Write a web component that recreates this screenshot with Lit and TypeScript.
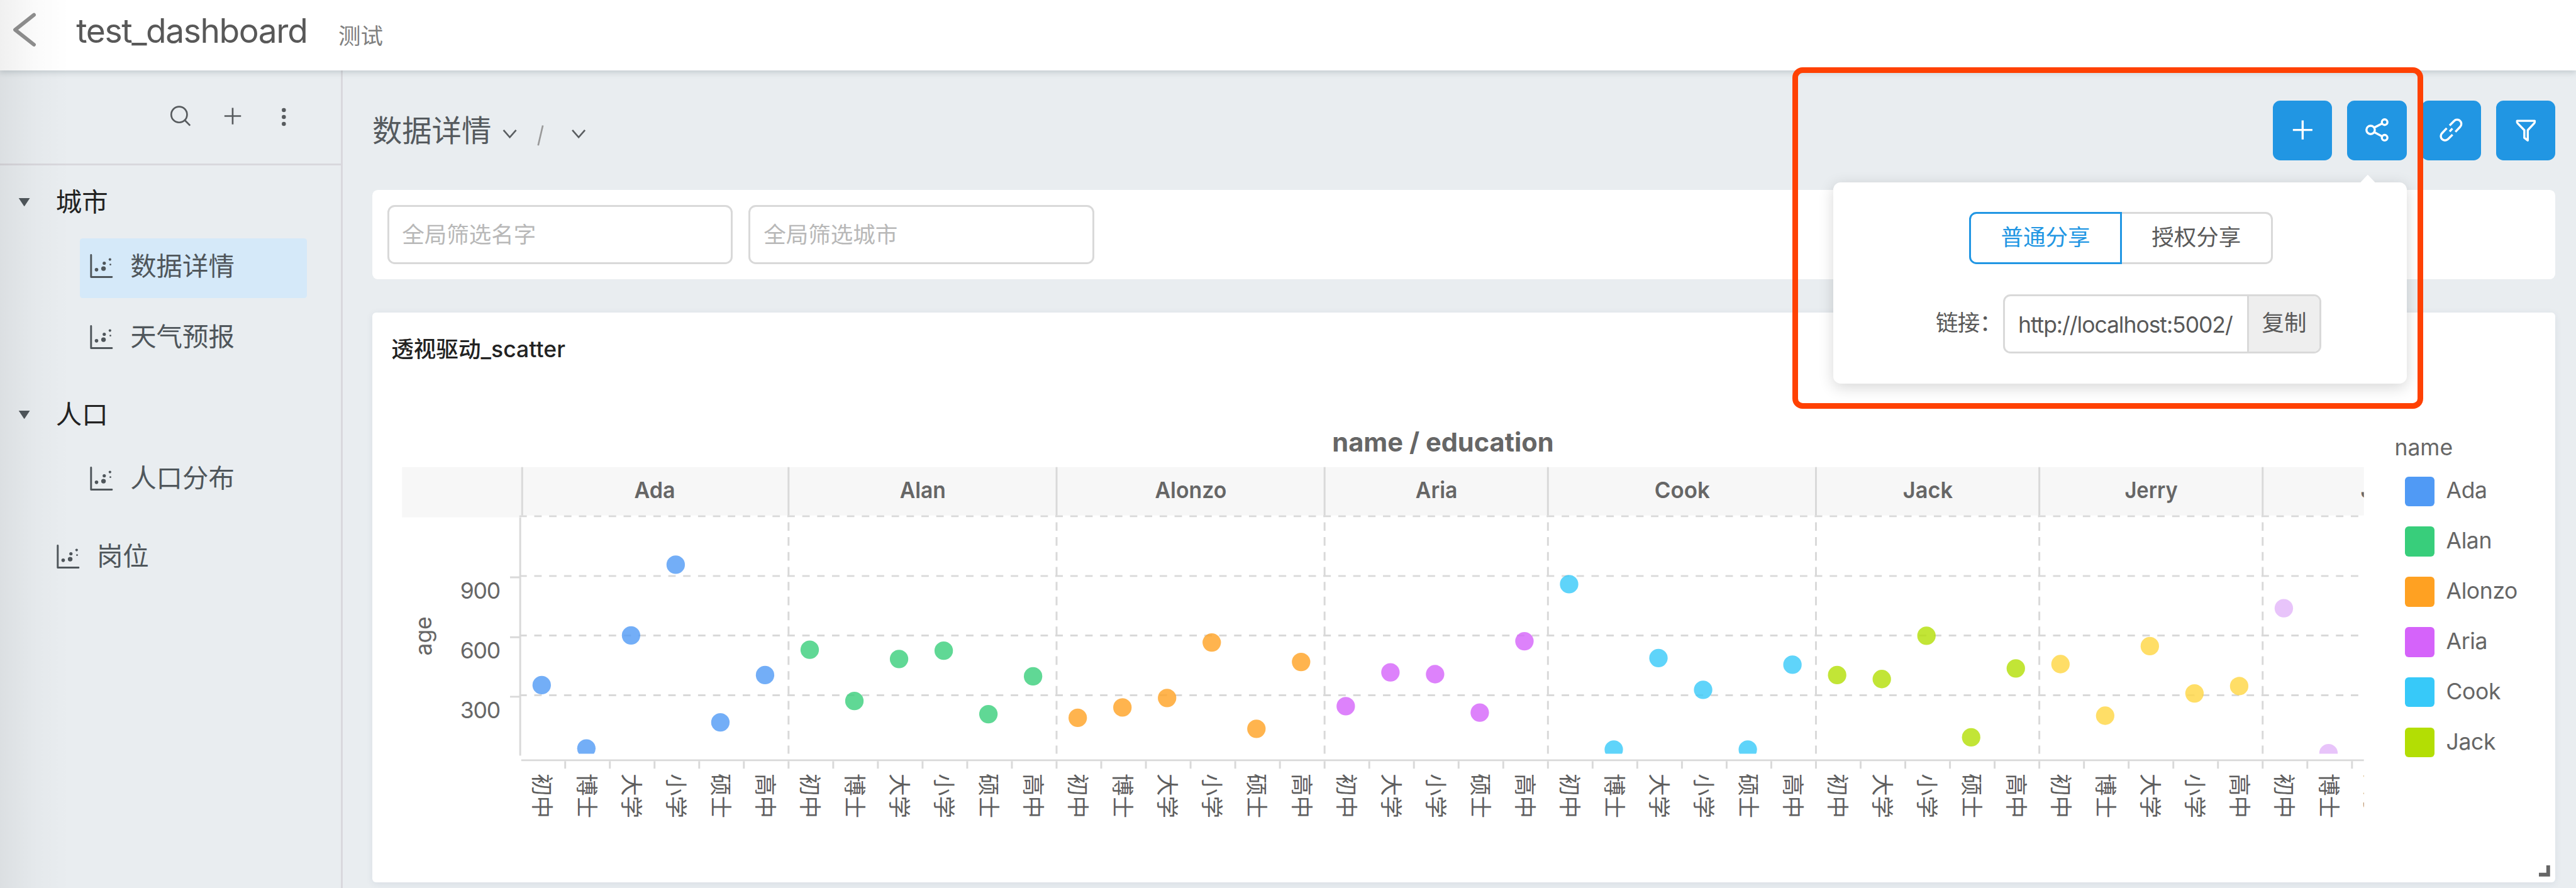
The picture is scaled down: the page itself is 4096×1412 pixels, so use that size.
import { LitElement, html, svg, unsafeCSS, nothing } from "lit";
import { customElement, property } from "lit/decorators.js";

/* Design units: the board is drawn on a 5536-unit wide grid. */
const SCALE = 4096 / 5536;

/* Style sheet tag: every "<number>u" is a length in design units. */
const sheet = (strings: TemplateStringsArray) =>
  unsafeCSS(
    strings[0].replace(/(-?\d+(?:\.\d+)?)u\b/g, (_m, n) => `${(parseFloat(n) * SCALE).toFixed(3)}px`)
  );

const scatterIcon = html`<svg class="scatter" viewBox="0 0 52 52">
  <path d="M3.8 2V49.4H48.5" fill="none" stroke="#4f565b" stroke-width="4" stroke-linecap="round" stroke-linejoin="round"/>
  <g fill="#4f565b">
    <circle cx="15.5" cy="33.6" r="3.8"/><circle cx="30.5" cy="31.2" r="5"/>
    <circle cx="32.1" cy="19.6" r="3.5"/><circle cx="44.4" cy="11.6" r="2.8"/>
    <circle cx="45.3" cy="22.6" r="1.9"/>
  </g>
</svg>`;

interface Series {
  name: string;
  color: string;
  width: number;
  levels: string[];
  points: number[];
}

const JUNIOR = "初中";
const DOCTOR = "博士";
const COLLEGE = "大学";
const PRIMARY = "小学";
const MASTER = "硕士";
const HIGH = "高中";
const ALL = [JUNIOR, DOCTOR, COLLEGE, PRIMARY, MASTER, HIGH];

const SERIES: Series[] = [
  { name: "Ada", color: "#509af5", width: 88, levels: ALL, points: [1472.6, 1608.7, 1365.8, 1213.7, 1552.6, 1451] },
  { name: "Alan", color: "#38ce7b", width: 99, levels: ALL, points: [1396.6, 1506.7, 1416.3, 1398.6, 1535, 1453.6] },
  { name: "Alonzo", color: "#ffa122", width: 154, levels: ALL, points: [1542.8, 1520.5, 1500.2, 1380.9, 1566.4, 1422.8] },
  { name: "Aria", color: "#d563fa", width: 90, levels: [JUNIOR, COLLEGE, PRIMARY, MASTER, HIGH], points: [1517.9, 1445.1, 1449, 1531.7, 1378.2] },
  { name: "Cook", color: "#37c9f9", width: 119, levels: ALL, points: [1255.6, 1611, 1414.3, 1482.5, 1611, 1428.7] },
  { name: "Jack", color: "#b3de04", width: 107, levels: [JUNIOR, COLLEGE, PRIMARY, MASTER, HIGH], points: [1451, 1459.5, 1366.5, 1584.8, 1436.6] },
  { name: "Jerry", color: "#ffd641", width: 114, levels: [JUNIOR, DOCTOR, COLLEGE, PRIMARY, HIGH], points: [1427.4, 1538.2, 1388.7, 1490.4, 1474.6] },
  { name: "J", color: "#e2b5f9", width: 0, levels: [JUNIOR, DOCTOR, COLLEGE], points: [1307.4, 1618.9] },
];

const LEFT = 1118;
const STEP = 96;
const RIGHT = 5080;
const GRID = [1109.6, 1238, 1366, 1494.4];

@customElement("scatter-chart")
class ScatterChart extends LitElement {
  static styles = sheet`
    :host { display: block; flex: none; width: 4300u; height: 1016u; }
    .plot { display: block; width: 100%; height: 100%; font-family: Inter, "Noto Sans CJK SC", sans-serif; font-size: 48px; }
    .band { fill: #f7f7f7; }
    .rule { stroke: #d9d9d9; stroke-width: 4; fill: none; }
    .head { font-weight: 600; fill: #666; }
    .main { font-weight: 700; font-size: 56px; fill: #666; }
    .label { fill: #666; }
    .level { fill: #5e5e5e; }
  `;

  private column(s: Series, x: number) {
    const span = s.levels.length * STEP;
    const end = Math.min(x + (s.points.length < s.levels.length ? 216 : span), RIGHT);
    return svg`
      ${GRID.map((y) => svg`<line class="rule" x1=${x - 2} x2=${end} y1=${y} y2=${y} stroke-dasharray="16 16"></line>`)}
      <line class="rule" x1=${x === LEFT ? x + 4 : x + 0.5} x2=${x === LEFT ? x + 4 : x + 0.5} y1="1004" y2="1108"></line>
      ${x > LEFT
        ? svg`<line class="rule" x1=${x + 0.5} x2=${x + 0.5} y1="1122.5" y2="1620" stroke-dasharray="18.5 13.5"></line>`
        : nothing}
      ${s.width
        ? svg`<text class="head" x=${x + span / 2 + 1 - s.width / 2} y="1070.8" textLength=${s.width} lengthAdjust="spacingAndGlyphs">${s.name}</text>`
        : svg`<text class="head" x="5073" y="1070.8">${s.name}</text>`}
      <g clip-path="url(#area)">
        ${s.points.map((y, i) => svg`<circle cx=${x + 46 + i * STEP} cy=${y} r="19.8" fill=${s.color} fill-opacity="0.8"></circle>`)}
      </g>
      ${s.levels.map((l, i) => {
        const cx = x + 48 + i * STEP;
        return svg`
          <line class="rule" x1=${cx + 48.5} x2=${cx + 48.5} y1="1636" y2="1652"></line>
          <text class="level" transform="translate(${cx - 18.6} 1662.5) rotate(90)">${l}</text>`;
      })}
    `;
  }

  render() {
    let x = LEFT;
    const columns = SERIES.map((s) => {
      const out = this.column(s, x);
      x += s.levels.length * STEP;
      return out;
    });
    return html`<svg class="plot" viewBox="800 880 4300 1016">
      <defs>
        <clipPath id="frame"><rect x="800" y="880" width="4280" height="1016"/></clipPath>
        <clipPath id="area"><rect x="1118" y="1110" width="3962" height="510"/></clipPath>
      </defs>
      <text class="main" x="2863" y="971" textLength="476" lengthAdjust="spacingAndGlyphs">name / education</text>
      <rect class="band" x="864" y="1004" width="256" height="108"/>
      <rect class="band" x="1120" y="1004" width="3960" height="104"/>
      <g clip-path="url(#frame)">${columns}</g>
      <path class="rule" d="M1117.8 1112V1624M1096 1241H1118M1096 1369.5H1118M1096 1497.5H1118M1120 1634H5080"/>
      <text class="label" x="989" y="1287" textLength="87">900</text>
      <text class="label" x="989" y="1415.2" textLength="87">600</text>
      <text class="label" x="989" y="1543.4" textLength="87">300</text>
      <text class="label" transform="translate(927 1409) rotate(-90)" textLength="84">age</text>
    </svg>`;
  }
}

@customElement("share-popover")
class SharePopover extends LitElement {
  static styles = sheet`
    :host { display: flex; flex-direction: column; align-items: center; box-sizing: border-box;
      width: 1232u; height: 432u; padding-top: 64u; background: #fff; border-radius: 16u;
      box-shadow: 0 8u 32u rgba(0,0,0,0.16); font-family: Inter, "Noto Sans CJK SC", sans-serif; font-size: 48u;
      line-height: 64u; color: #595959; position: relative; }
    .arrow { position: absolute; top: -18u; right: 68u; width: 32u; height: 18u; display: block; }
    .modes { display: flex; width: 652u; height: 112u; margin-left: 4u; }
    .mode { box-sizing: border-box; flex: none; display: flex; align-items: center; justify-content: center;
      width: 324u; border: 3px solid #d9d9d9; border-left: 0; border-radius: 0 16u 16u 0; padding-bottom: 2u; }
    .mode.active { width: 328u; border: 3px solid #2196e3; border-radius: 16u 0 0 16u; color: #2196e3; }
    .link { display: flex; align-items: center; margin-top: 64u; height: 128u; align-self: flex-start; padding-left: 220u; }
    .caption { width: 145u; white-space: nowrap; padding-bottom: 4u; letter-spacing: -0.8u; }
    .field { box-sizing: border-box; display: flex; width: 684u; height: 128u; border: 3px solid #d9d9d9;
      border-radius: 16u; overflow: hidden; }
    .url { flex: 1; display: flex; align-items: center; min-width: 0; padding: 4u 29u 0 28u; }
    .value { overflow: hidden; white-space: nowrap; letter-spacing: -1.4u; }
    .copy { box-sizing: border-box; width: 156u; background: #eee; border-left: 3px solid #d9d9d9; display: flex;
      align-items: center; justify-content: center; padding-bottom: 4u; }
  `;
  render() {
    return html`
      <svg class="arrow" viewBox="0 0 32 18"><path d="M16 1L32 18H0Z" fill="#fff"/></svg>
      <div class="modes"><div class="mode active">普通分享</div><div class="mode">授权分享</div></div>
      <div class="link">
        <div class="caption">链接：</div>
        <div class="field">
          <div class="url"><div class="value">http://localhost:5002/s</div></div>
          <div class="copy">复制</div>
        </div>
      </div>`;
  }
}

@customElement("nav-item")
class NavItem extends LitElement {
  @property() label = "";
  static styles = sheet`
    :host { display: flex; align-items: center; box-sizing: border-box; height: 128u; width: 488u;
      border-radius: 6u; padding: 0 0 8u 20u; gap: 36u; font-size: 56u; line-height: 80u; color: #4f565b; white-space: nowrap; }
    .scatter { width: 52u; height: 52u; flex: none; position: relative; top: 0.5u; }
  `;
  render() {
    return html`${scatterIcon}<span>${this.label}</span>`;
  }
}

@customElement("app-root")
class AppRoot extends LitElement {
  static styles = sheet`
    :host { display: flex; flex-direction: column; position: relative; width: 100vw; height: 100vh; overflow: hidden;
      background: #e9edf0; font-family: Inter, "Noto Sans CJK SC", sans-serif; color: #595959; }
    svg { display: block; }
    .top { flex: none; display: flex; align-items: flex-start; height: 152u; background: #fff; position: relative;
      box-shadow: 0 3u 12u 2u rgba(60,80,90,0.22); z-index: 1; }
    .back { width: 164u; height: 128u; }
    .board { font-size: 72u; line-height: 96u; padding-top: 18u; letter-spacing: -1.9u; color: #585858; width: 563u; }
    .note { font-size: 48u; line-height: 64u; padding-top: 46u; color: #808080; }
    .body { flex: 1; display: flex; min-height: 0; }
    .side { flex: none; box-sizing: border-box; width: 736u; border-right: 3px solid #d9d8dd; display: flex; flex-direction: column; }
    .tools { flex: none; box-sizing: border-box; height: 204u; border-bottom: 3px solid #d9d8dd; }
    .tools svg { width: 732u; height: 200u; }
    .group { box-sizing: border-box; display: flex; align-items: center; height: 156u; padding: 1u 0 0 39u; font-size: 56u;
      line-height: 80u; color: #222; gap: 55u; }
    .group.second { height: 176u; padding-top: 23u; }
    .caret { width: 26u; height: 18u; }
    .kids { display: flex; flex-direction: column; gap: 24u; padding-left: 172u; }
    .on { background: #d5e9f9; }
    .solo { margin: 40u 0 0 100u; }
    .main { flex: 1; min-width: 0; display: flex; flex-direction: column; padding: 64u 44u 12u 64u; }
    .bar { flex: none; display: flex; justify-content: space-between; height: 192u; }
    .crumbs { display: flex; height: 128u; align-items: center; font-size: 64u; line-height: 80u; color: #555a5e; }
    .crumbs svg { width: 240u; height: 80u; }
    .actions { display: flex; gap: 32u; position: relative; }
    .act { width: 128u; height: 128u; border-radius: 16u; background: #2196e3; }
    .act svg { width: 128u; height: 128u; fill: none; stroke: #fff; stroke-width: 4.6; stroke-linecap: round; stroke-linejoin: round; }
    .pop { position: absolute; top: 176u; right: 320u; z-index: 3; }
    .filters { flex: none; box-sizing: border-box; display: flex; gap: 34u; height: 192u; padding: 32u; background: #fff; border-radius: 12u; }
    .pick { box-sizing: border-box; width: 743u; height: 128u; border: 3px solid #d9d9d9; border-radius: 16u; display: flex;
      align-items: center; padding: 3u 0 0 28u; font-size: 48u; line-height: 64u; color: #b8b8b8; }
    .card { flex: none; display: flex; flex-direction: column; position: relative; height: 1224u; margin-top: 72u; background: #fff; border-radius: 8u;
      box-shadow: 0 4u 16u rgba(40,60,110,0.08); }
    .name { flex: none; height: 208u; box-sizing: border-box; padding: 47u 0 0 41u; font-size: 48u; line-height: 64u;
      font-weight: 500; color: #222; letter-spacing: 0.1u; }
    .chart { display: flex; }
    .legend { display: flex; flex-direction: column; padding-top: 50u; margin-left: 46u; font-size: 48u; color: #666; line-height: 64u; }
    .heading { height: 94u; }
    .entries { display: flex; flex-direction: column; gap: 44u; padding-left: 22u; }
    .entry { display: flex; height: 64u; gap: 25u; align-items: center; letter-spacing: -0.5u; }
    .swatch { width: 64u; height: 64u; border-radius: 8u; }
    .entry span { position: relative; top: -2u; }
    .grip { position: absolute; right: 12u; bottom: 12u; width: 24u; height: 24u; }
    .shade { position: absolute; left: 0; top: 0; bottom: 0; width: 150u; z-index: 2;
      background: linear-gradient(90deg, rgba(0,0,0,0.058), rgba(0,0,0,0.02) 50%, rgba(0,0,0,0)); }
    .mark { position: absolute; box-sizing: border-box; left: 3852u; top: 145u; width: 1356u; height: 733u;
      border: 9px solid #ff4103; border-radius: 22u; z-index: 4; }
  `;

  render() {
    const caret = html`<svg class="caret" viewBox="0 0 26 18"><path d="M1 0H25L13.8 17Q13 18 12.2 17Z" fill="#4f565b"/></svg>`;
    return html`
      <header class="top">
        <svg class="back" viewBox="0 0 164 128"><path d="M73 32L32.5 64L73 96" fill="none" stroke="#909090" stroke-width="8" stroke-linecap="round" stroke-linejoin="round"/></svg>
        <div class="board">test_dashboard</div>
        <div class="note">测试</div>
      </header>
      <div class="body">
        <aside class="side">
          <div class="tools">
            <svg viewBox="0 152 732 200" fill="none" stroke="#575b5e" stroke-width="3.6">
              <circle cx="385" cy="246.8" r="17"/><path d="M397 258.8L408.5 270.5"/>
              <path d="M482.3 250H518M500 232.3V268"/>
              <g fill="#575b5e" stroke="none"><circle cx="610" cy="237" r="4.4"/><circle cx="610" cy="252" r="4.4"/><circle cx="610" cy="267" r="4.4"/></g>
            </svg>
          </div>
          <div class="group">${caret}<span>城市</span></div>
          <div class="kids">
            <nav-item class="on" label="数据详情"></nav-item>
            <nav-item label="天气预报"></nav-item>
          </div>
          <div class="group second">${caret}<span>人口</span></div>
          <div class="kids"><nav-item label="人口分布"></nav-item></div>
          <nav-item class="solo" label="岗位"></nav-item>
        </aside>
        <main class="main">
          <div class="bar">
            <div class="crumbs">
              <span>数据详情</span>
              <svg viewBox="1056 240 240 80" fill="none" stroke="#5a5e61" stroke-width="3.6">
                <path d="M1082.5 279L1096 294.5L1109.5 279M1230.5 279L1244 294.5L1257.5 279"/>
                <path d="M1167 269L1157 312" stroke="#999"/>
              </svg>
            </div>
            <div class="actions">
              <div class="act"><svg viewBox="-64 -64 128 128"><path d="M-21 -1H21M0 -21.5V19.5" stroke-linecap="butt"/></svg></div>
              <div class="act"><svg viewBox="-64 -64 128 128"><circle cx="-13.4" cy="-1" r="9"/><circle cx="16.7" cy="-17.7" r="6"/><circle cx="16.7" cy="15.7" r="6"/><path d="M-5 -6.4L11 -14.6M-5.4 4L11 12.6"/></svg></div>
              <div class="act"><svg viewBox="-64 -64 128 128"><path stroke-linecap="butt" d="M-3.1 -10.7L6.6 -20.4A9 9 0 0 1 19.4 -7.6L9.3 3M3.1 9.1L-6.6 18.8A9 9 0 0 1 -19.4 6L-9.3 -4.6M-3 2.3L2.8 -4"/></svg></div>
              <div class="act"><svg viewBox="-64 -64 128 128"><path d="M-19 -20.6H19Q19.4 -17 18 -15.6L4 -0.5V21.6L-3.4 16V-0.5L-18 -15.6Q-19.4 -17 -19 -20.6Z"/></svg></div>
              <share-popover class="pop"></share-popover>
            </div>
          </div>
          <div class="filters"><div class="pick">全局筛选名字</div><div class="pick">全局筛选城市</div></div>
          <section class="card">
            <div class="name">透视驱动_scatter</div>
            <div class="chart">
              <scatter-chart></scatter-chart>
              <div class="legend">
                <div class="heading">name</div>
                <div class="entries">
                  ${SERIES.slice(0, 6).map(
                    (s) => html`<div class="entry"><div class="swatch" style="background:${s.color}"></div><span>${s.name}</span></div>`
                  )}
                </div>
              </div>
            </div>
            <svg class="grip" viewBox="0 0 24 24"><path d="M20 0V20H0" fill="none" stroke="#666" stroke-width="8"/></svg>
          </section>
        </main>
      </div>
      <div class="shade"></div>
      <div class="mark"></div>
    `;
  }
}
